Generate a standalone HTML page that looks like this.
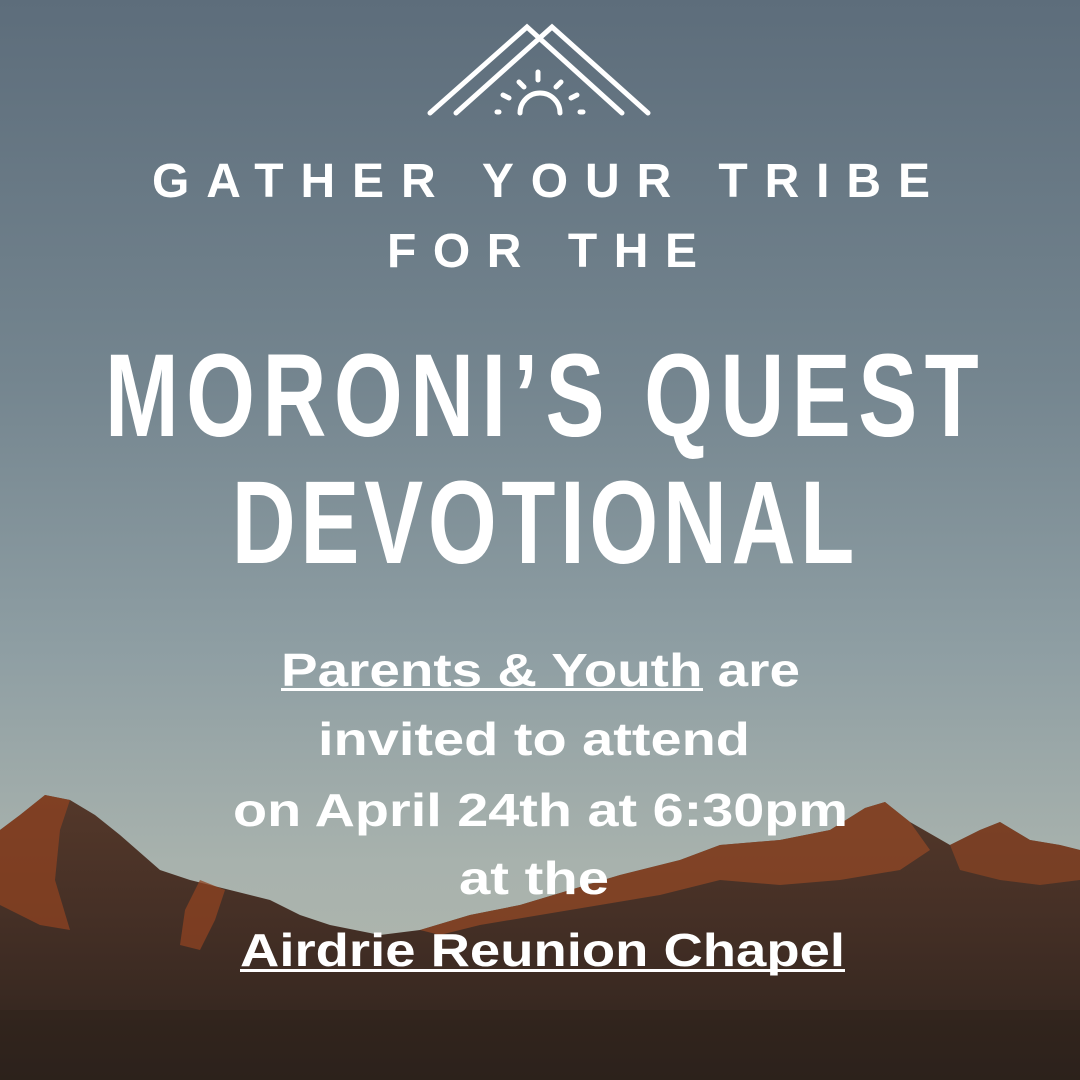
<!DOCTYPE html>
<html><head><meta charset="utf-8"><style>
html,body{margin:0;padding:0;width:1080px;height:1080px;overflow:hidden;background:#6b7b87}
svg{display:block}
</style></head><body>
<svg width="1080" height="1080" viewBox="0 0 1080 1080" xmlns="http://www.w3.org/2000/svg">
<defs>
<linearGradient id="sky" x1="0" y1="0" x2="0" y2="1">
<stop offset="0" stop-color="#5d6d7b"/>
<stop offset="0.35" stop-color="#74858f"/>
<stop offset="0.6" stop-color="#8e9ea3"/>
<stop offset="0.8" stop-color="#a8b2ad"/>
<stop offset="1" stop-color="#b4b8ac"/>
</linearGradient>
<linearGradient id="mtn" x1="0" y1="0" x2="0" y2="1">
<stop offset="0" stop-color="#54382a"/>
<stop offset="0.4" stop-color="#463026"/>
<stop offset="1" stop-color="#2e231d"/>
</linearGradient>
</defs>
<rect width="1080" height="1080" fill="url(#sky)"/>
<path d="M0 830 L20 815 L45 795 L70 800 L95 815 L120 835 L160 870 L190 880 L230 890 L270 900 L300 915 L330 925 L380 935 L420 930 L470 915 L520 905 L570 890 L620 875 L680 860 L720 845 L780 840 L830 830 L865 808 L885 802 L910 822 L950 845 L980 830 L1000 822 L1030 840 L1060 845 L1080 850 L1080 1080 L0 1080 Z" fill="url(#mtn)"/>
<path d="M0 830 L20 815 L45 795 L70 800 L60 830 L55 880 L70 930 L40 925 L10 910 L0 905 Z" fill="#8f4322" opacity="0.75"/>
<path d="M200 880 L225 890 L215 920 L200 950 L180 945 L185 910 Z" fill="#8f4322" opacity="0.75"/>
<path d="M420 930 L470 915 L520 905 L570 890 L620 875 L680 860 L720 845 L780 840 L830 830 L865 808 L885 802 L910 822 L930 850 L900 870 L840 880 L780 885 L720 880 L660 895 L600 905 L540 915 L480 925 L440 935 Z" fill="#924826" opacity="0.75"/>
<path d="M950 845 L980 830 L1000 822 L1030 840 L1060 845 L1080 850 L1080 880 L1040 885 L1000 880 L960 870 Z" fill="#8c4424" opacity="0.7"/>
<rect x="0" y="1010" width="1080" height="70" fill="#2a201a" opacity="0.4"/>
<g fill="none" stroke="#fff" stroke-width="5" stroke-linecap="round">
<path d="M430 113 L527 27 L622 113"/>
<path d="M456 113 L552 27 L648 113"/>
<path d="M520 113 A20 20 0 0 1 560 113"/>
<path d="M538 72 L538 80"/>
<path d="M519 82 L524 87"/>
<path d="M561 82 L556 87"/>
<path d="M503 95 L509 98"/>
<path d="M577 95 L571 98"/>
<path d="M497 112 L499 112"/>
<path d="M580 112 L583 112"/>
</g>
<g fill="#fff" font-family="'Liberation Sans',sans-serif">
<text x="152" y="197" font-size="48" font-weight="bold" textLength="778" lengthAdjust="spacing">GATHER YOUR TRIBE</text>
<text x="387" y="267" font-size="48" font-weight="bold" textLength="310" lengthAdjust="spacing">FOR THE</text>
<g font-family="'Liberation Sans Narrow','Liberation Sans',sans-serif" font-weight="bold" transform="scale(0.75,1)">
<text x="140" y="436" font-size="118" textLength="1165" lengthAdjust="spacing">MORONI’S QUEST</text>
<text x="309" y="563" font-size="118" textLength="830" lengthAdjust="spacing">DEVOTIONAL</text>
</g>
<g font-size="46" font-weight="bold">
<text x="281" y="686" textLength="519" lengthAdjust="spacingAndGlyphs">Parents &amp; Youth are</text>
<text x="318" y="755" textLength="432" lengthAdjust="spacingAndGlyphs">invited to attend</text>
<text x="233" y="826" textLength="615" lengthAdjust="spacingAndGlyphs">on April 24th at 6:30pm</text>
<text x="459" y="894" textLength="150" lengthAdjust="spacingAndGlyphs">at the</text>
<text x="240" y="966" textLength="605" lengthAdjust="spacingAndGlyphs">Airdrie Reunion Chapel</text>
</g>
<rect x="281" y="688" width="422" height="3"/>
<rect x="240" y="969" width="605" height="3"/>
</g>
</svg>
</body></html>
